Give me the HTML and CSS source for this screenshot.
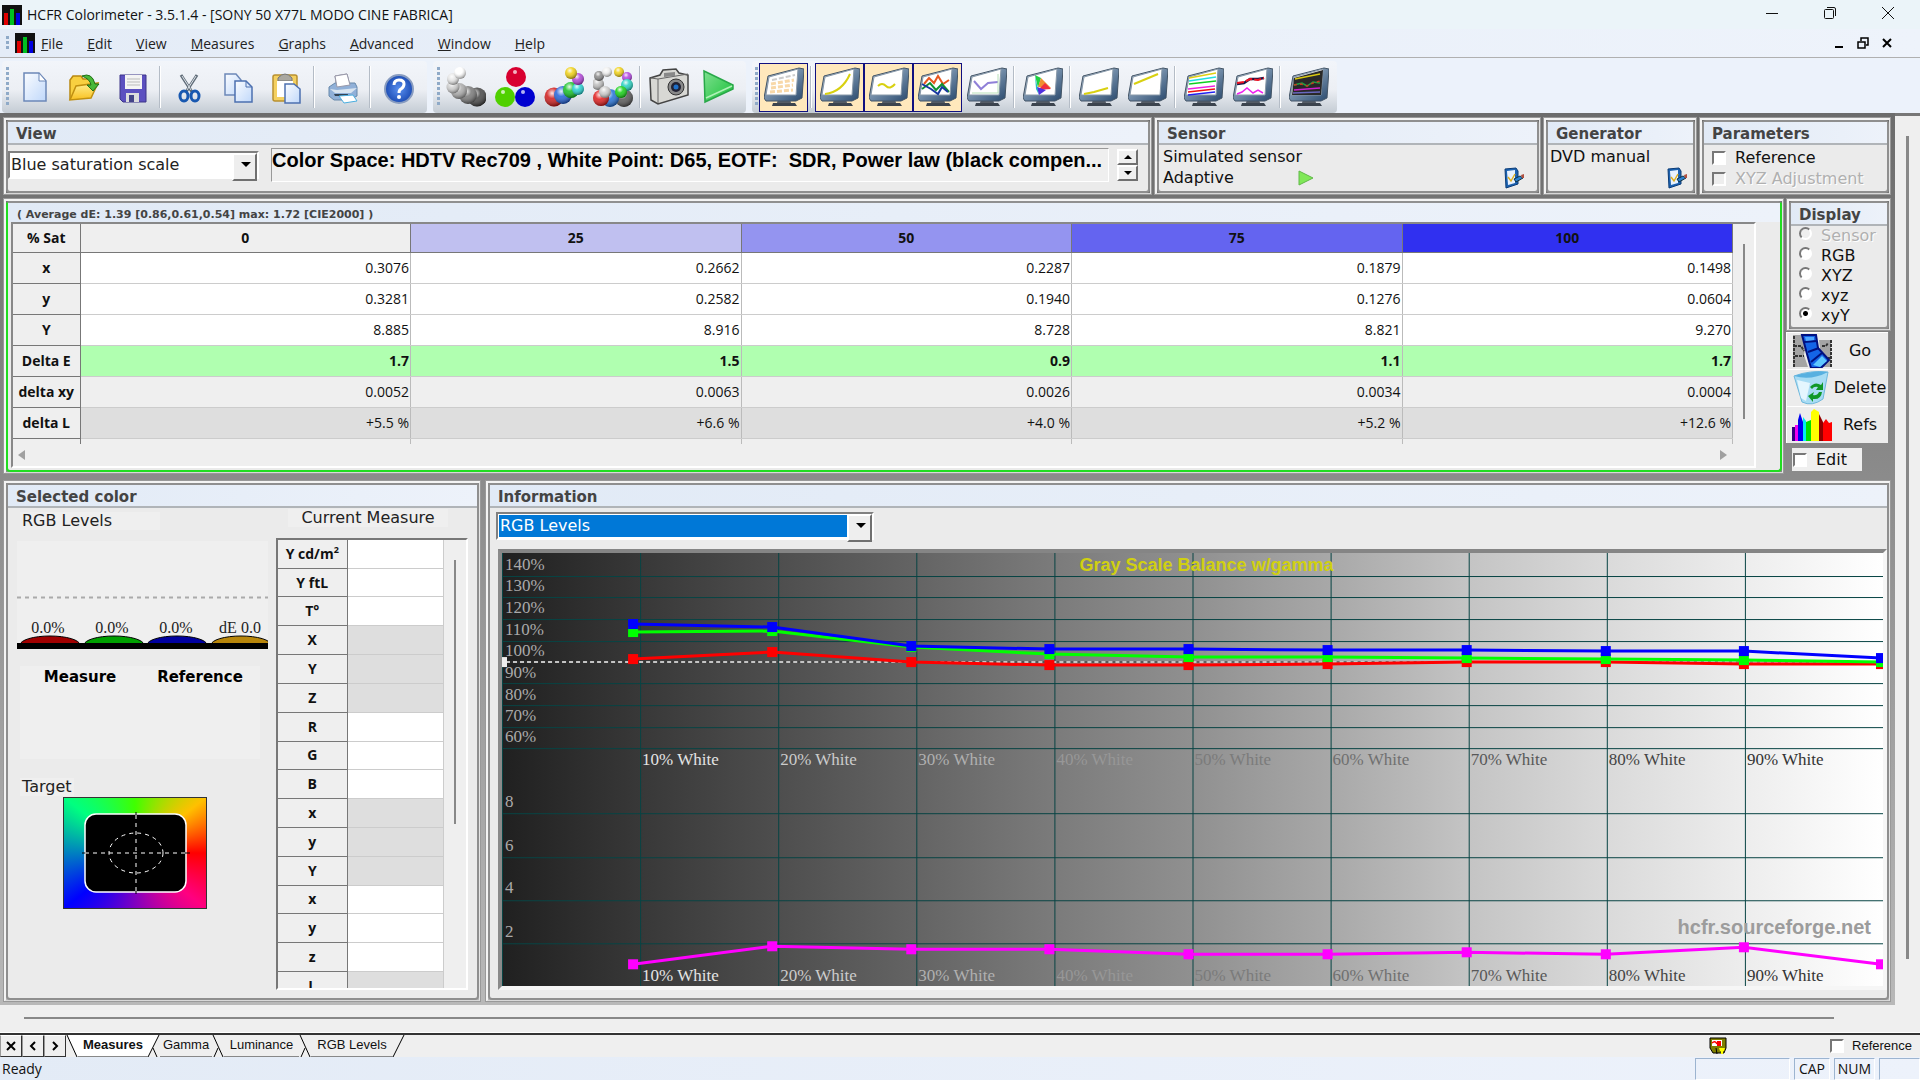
FILE: index.html
```
<!DOCTYPE html>
<html lang="en">
<head>
<meta charset="UTF-8" />
<title>HCFR Colorimeter</title>
<link rel="stylesheet" href="styles.css">
</head>
<body>
  <!-- shared icon parts -->
  <svg class="defs" width="0" height="0">
    <defs>
      <linearGradient id="blueMetal" x1="0" y1="0" x2="1" y2="1"><stop offset="0" stop-color="#b8cce0"/><stop offset="1" stop-color="#28486c"/></linearGradient>
      <linearGradient id="page" x1="0" y1="0" x2="1" y2="1"><stop offset="0" stop-color="#fafcff"/><stop offset="1" stop-color="#c0d8fa"/></linearGradient>
      <linearGradient id="folder" x1="0" y1="0" x2="0" y2="1"><stop offset="0" stop-color="#fff090"/><stop offset="1" stop-color="#f8c020"/></linearGradient>
      <linearGradient id="play" x1="0" y1="0" x2="1" y2="1"><stop offset="0" stop-color="#7fe090"/><stop offset="1" stop-color="#18c038"/></linearGradient>
      <radialGradient id="help"><stop offset="0" stop-color="#5a90f0"/><stop offset="1" stop-color="#1c4cb4"/></radialGradient>
      <radialGradient id="shine" cx=".4" cy=".3" r=".7"><stop offset="0" stop-color="#fff" stop-opacity=".9"/><stop offset=".4" stop-color="#fff" stop-opacity=".15"/><stop offset="1" stop-color="#000" stop-opacity=".45"/></radialGradient>
      <symbol id="monitor" viewBox="0 0 40 40">
        <path d="M14 32l12 0 1 4-14 0z" fill="#555c66"/>
        <path d="M9 36l22 0 2 3-25 0z" fill="#3c444e"/>
        <path d="M4 9L35 1l5 1-2 29-6 3H2l-2-3z" fill="url(#blueMetal)" stroke="#445566" stroke-width="1"/>
        <path d="M5 10L34 2l-2 26H2z" fill="#fff" stroke="#8898a8" stroke-width="1"/>
      </symbol>
      <symbol id="pen" viewBox="0 0 22 22">
        <path d="M2 2l11-1 2 3v13l-12 4z" fill="#1c62b0" stroke="#0b3c78"/>
        <path d="M4 4l8-1v13l-7 2z" fill="#e8f2ff"/>
        <path d="M5 10l3 4 4-7" fill="none" stroke="#e0b020" stroke-width="1.500"/>
        <path d="M11 12l6-3 3 2-7 4z" fill="#2a80d0" stroke="#134"/><path d="M18 8l3-1v4l-2 0z" fill="#b05040"/>
      </symbol>
    </defs>
  </svg>

  <header class="titlebar">
    <svg class="appicon" viewBox="0 0 20 20"><rect width="20" height="20" fill="#111"/><path d="M4 20V8" stroke="#e00000" stroke-width="4"/><path d="M10 20V4" stroke="#00c020" stroke-width="4"/><path d="M16 20V8" stroke="#0000e0" stroke-width="4"/></svg>
    <span class="title">HCFR Colorimeter - 3.5.1.4 - [SONY 50 X77L MODO CINE FABRICA]</span>
    <button class="winbtn" aria-label="Minimize"><svg viewBox="0 0 14 14"><path d="M1 7.500h12"/></svg></button>
    <button class="winbtn" aria-label="Restore"><svg viewBox="0 0 14 14"><rect x="1.500" y="3.500" width="9" height="9" rx="1"/><path d="M4 1.500h7q1.500 0 1.500 1.500v7"/></svg></button>
    <button class="winbtn" aria-label="Close"><svg viewBox="0 0 14 14"><path d="M1 1l12 12M13 1L1 13"/></svg></button>
  </header>

  <nav class="menubar">
    <span class="grip"></span>
    <svg class="appicon" viewBox="0 0 20 20"><rect width="20" height="20" fill="#111"/><path d="M4 20V8" stroke="#e00000" stroke-width="4"/><path d="M10 20V4" stroke="#00c020" stroke-width="4"/><path d="M16 20V8" stroke="#0000e0" stroke-width="4"/></svg>
    <a href="#"><u>F</u>ile</a>
    <a href="#"><u>E</u>dit</a>
    <a href="#"><u>V</u>iew</a>
    <a href="#"><u>M</u>easures</a>
    <a href="#"><u>G</u>raphs</a>
    <a href="#"><u>A</u>dvanced</a>
    <a href="#"><u>W</u>indow</a>
    <a href="#"><u>H</u>elp</a>
    <span class="spacer"></span>
    <button class="mdibtn" aria-label="Minimize child"><svg viewBox="0 0 12 12"><path d="M2 10h8"/></svg></button>
    <button class="mdibtn" aria-label="Restore child"><svg viewBox="0 0 12 12"><path d="M1 5h7v6H1zM4 4V1h7v7H9" stroke-width="1.500"/></svg></button>
    <button class="mdibtn" aria-label="Close child"><svg viewBox="0 0 12 12"><path d="M2 2l8 8M10 2l-8 8"/></svg></button>
  </nav>

  <div class="toolbars">
    <div class="toolbar">
      <span class="grip"></span>
      <button class="tool" aria-label="New"><svg viewBox="0 0 40 40"><path d="M9 6h15l7 8v20H9z" fill="url(#page)" stroke="#6c88b8" stroke-width="1.500"/><path d="M24 6v8h7z" fill="#fff" stroke="#6c88b8"/></svg></button>
      <button class="tool" aria-label="Open"><svg viewBox="0 0 40 40"><path d="M6 33V13l3-4h8l2 3h9v8" fill="#f8d040" stroke="#b88810" stroke-width="1.500"/><path d="M6 33l6-14 22-3-7 15z" fill="url(#folder)" stroke="#c09010" stroke-width="1.500"/><path d="M18 9q10-4 13 8h4l-6 7-6-6h4q-1-6-9-9z" fill="#48b838" stroke="#207018"/></svg></button>
      <button class="tool" aria-label="Save"><svg viewBox="0 0 40 40"><path d="M7 8h26v27H10l-3-3z" fill="#5c50c0" stroke="#3c3488"/><path d="M12 8h17v14H12z" fill="#f4f4f4"/><path d="M14 12h13M14 15h13M14 18h13" stroke="#bbb"/><path d="M13 26h13v9H13z" fill="#ddd"/><path d="M16 28h5v7h-5z" fill="#444488"/></svg></button>
      <span class="sep"></span>
      <button class="tool" aria-label="Cut"><svg viewBox="0 0 40 40"><path d="M12 8l11 17M28 8L17 25" stroke="#606c78" stroke-width="3"/><path d="M13 9l9 14M27 9l-9 14" stroke="#dde4ea"/><ellipse cx="15" cy="29" rx="4" ry="5" fill="none" stroke="#1858b0" stroke-width="3"/><ellipse cx="26" cy="29" rx="4" ry="5" fill="none" stroke="#1858b0" stroke-width="3"/></svg></button>
      <button class="tool" aria-label="Copy"><svg viewBox="0 0 40 40"><path d="M7 7h11l5 6v15H7z" fill="url(#page)" stroke="#6c88b8" stroke-width="1.500"/><path d="M17 14h11l6 6v15H17z" fill="url(#page)" stroke="#4c70b0" stroke-width="1.500"/><path d="M28 14v6h6" fill="none" stroke="#4c70b0"/></svg></button>
      <button class="tool" aria-label="Paste"><svg viewBox="0 0 40 40"><rect x="6" y="8" width="24" height="26" rx="2" fill="#f4d060" stroke="#b89030" stroke-width="1.500"/><path d="M11 11q7-8 14 0v3H11z" fill="#aaa8a0" stroke="#777"/><rect x="10" y="14" width="16" height="16" fill="#fff"/><path d="M18 17h9l6 5v14H18z" fill="url(#page)" stroke="#4c70b0" stroke-width="1.500"/></svg></button>
      <span class="sep"></span>
      <button class="tool" aria-label="Print"><svg viewBox="0 0 40 40"><path d="M12 9l12-2 3 12-13 3z" fill="#fff" stroke="#889"/><path d="M6 20l6-4h20l2 4v9l-8 4H11l-5-4z" fill="#90b0d8" stroke="#68a"/><path d="M12 9l12-2 3 11-13 2z" fill="#fff" stroke="#99a"/><path d="M7 22l7 1 20-2-6 5H12z" fill="#d8e4f0"/><path d="M11 27l14 0v2H12z" fill="#345"/><path d="M16 29l14-1 4 6-13 2z" fill="#fff" stroke="#4aaee0"/></svg></button>
      <span class="sep"></span>
      <button class="tool" aria-label="Help"><svg viewBox="0 0 40 40"><circle cx="20" cy="22" r="14" fill="url(#help)" stroke="#889cc0" stroke-width="2"/><path d="M15 18q0-5 5-5t5 4q0 3-3 5-2 1-2 4" fill="none" stroke="#fff" stroke-width="3"/><circle cx="20" cy="30" r="2" fill="#fff"/></svg></button>
    </div>

    <div class="toolbar">
      <span class="grip"></span>
      <button class="tool" aria-label="Gray scale"><svg viewBox="0 0 40 40">
        <circle cx="31" cy="30" r="9.500" fill="#444"/><circle cx="31" cy="30" r="9.500" fill="url(#shine)"/>
        <circle cx="22" cy="28" r="9" fill="#777"/><circle cx="22" cy="28" r="9" fill="url(#shine)"/>
        <circle cx="13" cy="24" r="8" fill="#aaa"/><circle cx="13" cy="24" r="8" fill="url(#shine)"/>
        <circle cx="7" cy="20" r="6.500" fill="#ccc"/><circle cx="7" cy="20" r="6.500" fill="url(#shine)"/>
        <circle cx="7" cy="12" r="6" fill="#e4e4e4"/><circle cx="7" cy="12" r="6" fill="url(#shine)"/>
        <circle cx="14" cy="6" r="6" fill="#fff"/><circle cx="14" cy="6" r="6" fill="url(#shine)"/></svg></button>
      <button class="tool" aria-label="Primaries"><svg viewBox="0 0 40 40"><circle cx="21" cy="10" r="10" fill="#d80030"/><circle cx="10" cy="30" r="10" fill="#50d000"/><circle cx="30" cy="30" r="10" fill="#0000d0"/><g fill="#fff" opacity=".7"><circle cx="20" cy="5" r="2"/><circle cx="8" cy="25" r="2"/><circle cx="28" cy="25" r="2"/></g></svg></button>
      <button class="tool" aria-label="Secondaries"><svg viewBox="0 0 40 40">
        <circle cx="10" cy="30" r="9.500" fill="#d01818"/><circle cx="10" cy="30" r="9.500" fill="url(#shine)"/>
        <circle cx="19" cy="28" r="9" fill="#2060d8"/><circle cx="19" cy="28" r="9" fill="url(#shine)"/>
        <circle cx="27" cy="23" r="8" fill="#10c020"/><circle cx="27" cy="23" r="8" fill="url(#shine)"/>
        <circle cx="34" cy="22" r="6" fill="#20d0d0"/><circle cx="34" cy="22" r="6" fill="url(#shine)"/>
        <circle cx="34" cy="12" r="6" fill="#b040d8"/><circle cx="34" cy="12" r="6" fill="url(#shine)"/>
        <circle cx="27" cy="6" r="6" fill="#f0d010"/><circle cx="27" cy="6" r="6" fill="url(#shine)"/></svg></button>
      <button class="tool" aria-label="All colors"><svg viewBox="0 0 40 40">
        <circle cx="31" cy="31" r="9" fill="#555"/><circle cx="31" cy="31" r="9" fill="url(#shine)"/>
        <circle cx="17" cy="31" r="9" fill="#2070d8"/><circle cx="17" cy="31" r="9" fill="url(#shine)"/>
        <circle cx="8" cy="31" r="8" fill="#e01818"/><circle cx="8" cy="31" r="8" fill="url(#shine)"/>
        <circle cx="5" cy="17" r="6" fill="#bbb"/><circle cx="5" cy="17" r="6" fill="url(#shine)"/>
        <circle cx="12" cy="25" r="6" fill="#ccc"/><circle cx="12" cy="25" r="6" fill="url(#shine)"/>
        <circle cx="6" cy="9" r="5" fill="#888"/><circle cx="6" cy="9" r="5" fill="url(#shine)"/>
        <circle cx="14" cy="5" r="5" fill="#eee"/><circle cx="14" cy="5" r="5" fill="url(#shine)"/>
        <circle cx="26" cy="5" r="5" fill="#f0d010"/><circle cx="26" cy="5" r="5" fill="url(#shine)"/>
        <circle cx="34" cy="10" r="5" fill="#b040e0"/><circle cx="34" cy="10" r="5" fill="url(#shine)"/>
        <circle cx="34" cy="18" r="6" fill="#20d0c0"/><circle cx="34" cy="18" r="6" fill="url(#shine)"/>
        <circle cx="28" cy="25" r="6" fill="#10d010"/><circle cx="28" cy="25" r="6" fill="url(#shine)"/></svg></button>
      <span class="sep"></span>
      <button class="tool" aria-label="Snapshot"><svg viewBox="0 0 40 40"><path d="M1 11l10-3 3-5 13-1 3 4 9 2v20L9 37l-7-4z" fill="#d8d8d4" stroke="#444" stroke-width="1.500"/><path d="M9 12v24M2 11l7 1 30-5" fill="none" stroke="#666"/><path d="M15 6l11-1v4l-11 1z" fill="#888"/><circle cx="27" cy="20" r="8" fill="#888" stroke="#333"/><circle cx="27" cy="20" r="5" fill="#223"/><circle cx="27" cy="20" r="2.500" fill="#2070c8"/></svg></button>
      <button class="tool" aria-label="Run"><svg viewBox="0 0 40 40"><path d="M6 4l29 14v4L7 35z" fill="url(#play)" stroke="#28a848" stroke-width="1.500"/><path d="M8 31l26-12" stroke="#b0f0b8" stroke-width="1.500"/></svg></button>
    </div>

    <div class="toolbar">
      <span class="grip"></span>
      <button class="tool on" aria-label="Measures"><svg viewBox="0 0 40 40"><use href="#monitor"/><path d="M8 13l23-5" stroke="#ccc" stroke-width="2" stroke-dasharray="5 2"/><path d="M7 17l23-4M7 21l22-3M6 25l23-2" stroke="#f8d8a8" stroke-width="3" stroke-dasharray="5 2"/></svg></button>
      <span class="sep"></span>
      <button class="tool on" aria-label="Luminance"><svg viewBox="0 0 40 40"><use href="#monitor"/><path d="M5 27q17-2 25-20" fill="none" stroke="#d8d010" stroke-width="2"/></svg></button>
      <button class="tool on" aria-label="Gamma"><svg viewBox="0 0 40 40"><use href="#monitor"/><path d="M9 19q4-4 8 0t9-2" fill="none" stroke="#d8d010" stroke-width="2"/></svg></button>
      <button class="tool on" aria-label="RGB levels"><svg viewBox="0 0 40 40"><use href="#monitor"/><g fill="none" stroke-width="2"><path d="M6 17l5-6 5 5 4-7 5 8 6-4" stroke="#e85820"/><path d="M4 22l8-6 6 7 6-6 7 8" stroke="#109030"/><path d="M4 17l9 5 7 5 4-7 6 5" stroke="#1838a0"/></g></svg></button>
      <button class="tool" aria-label="Color temperature"><svg viewBox="0 0 40 40"><use href="#monitor"/><path d="M7 14l7 8 7-6 10-1" fill="none" stroke="#9080d8" stroke-width="2"/><path d="M31 7v19H5" fill="none" stroke="#b8e0b8"/></svg></button>
      <span class="sep"></span>
      <button class="tool" aria-label="CIE diagram"><svg viewBox="0 0 40 40"><use href="#monitor"/><path d="M12 8l6 3-3 10z" fill="#20d040"/><path d="M18 11l10 10-13-1z" fill="#f09030"/><path d="M12 8l4 20-3-6z" fill="#20c0c0"/><path d="M22 16l6 6-13 1z" fill="#f03040"/><path d="M14 20l9 3-7 5z" fill="#5030e0"/></svg></button>
      <span class="sep"></span>
      <button class="tool" aria-label="Near black"><svg viewBox="0 0 40 40"><use href="#monitor"/><path d="M5 27l10-2 14-4" fill="none" stroke="#d8d010" stroke-width="2"/></svg></button>
      <button class="tool" aria-label="Near white"><svg viewBox="0 0 40 40"><use href="#monitor"/><path d="M6 17l12-5 12-5" fill="none" stroke="#d8d010" stroke-width="2"/></svg></button>
      <span class="sep"></span>
      <button class="tool" aria-label="Sat luminance"><svg viewBox="0 0 40 40"><use href="#monitor"/><g stroke-width="1.500"><path d="M5 11l27-5" stroke="#e0d010"/><path d="M5 14l27-4" stroke="#20e0e0"/><path d="M5 17l27-3" stroke="#10d020"/><path d="M4 22l27-3" stroke="#f020e0"/><path d="M4 25l27-3" stroke="#f01010"/><path d="M4 28l27-3" stroke="#2020f0"/></g></svg></button>
      <button class="tool" aria-label="Sat shift"><svg viewBox="0 0 40 40"><use href="#monitor"/><path d="M4 17l7-1 6-4 8 0 6-1" fill="none" stroke="#181848" stroke-width="2.500"/><path d="M4 16l7-1 6-3 8 1 6-2" fill="none" stroke="#f01020" stroke-width="2" stroke-dasharray="7 2"/><path d="M4 27l5-2 5-4 6 5 5-3 5 3" fill="none" stroke="#f020f0" stroke-width="1.500"/></svg></button>
      <span class="sep"></span>
      <button class="tool" aria-label="Free measures"><svg viewBox="0 0 40 40"><use href="#monitor"/><path d="M5 11L34 3l-2 25H3z" fill="#282828"/><g fill="none" stroke-width="1.500"><path d="M6 12l25-5" stroke="#d8c810"/><path d="M5 18l8-2 5 3 6-4 7 1" stroke="#20a040"/><path d="M5 18l7-1 6 2 6-3 7-2" stroke="#c04020" stroke-dasharray="3 3"/><path d="M5 23l26-2" stroke="#d020d0"/><path d="M4 26l27-1" stroke="#6868c0"/></g></svg></button>
    </div>
  </div>

  <div class="workspace">
    <main class="work">
      <div class="row">
        <section class="panel grow">
          <div class="inner">
            <h2>View</h2>
            <div class="viewbody">
              <div class="combo view"><select aria-label="View"><option>Blue saturation scale</option></select></div>
              <div class="info">Color Space: HDTV Rec709 , White Point: D65, EOTF:&nbsp; SDR, Power law (black compen...</div>
              <div class="spin">
                <button aria-label="Up"><i class="up"></i></button>
                <button aria-label="Down"><i class="down"></i></button>
              </div>
            </div>
          </div>
        </section>
        <section class="panel sensor">
          <div class="inner">
            <h2>Sensor</h2>
            <div class="devbody">
              <div class="lines"><p>Simulated sensor</p><p>Adaptive <svg class="mini" viewBox="0 0 16 16"><path d="M1 1l14 7L1 15z" fill="#80e858" stroke="#60b848"/></svg></p></div>
              <button class="iconbtn" aria-label="Configure sensor"><svg width="22" height="22"><use href="#pen"/></svg></button>
            </div>
          </div>
        </section>
        <section class="panel generator">
          <div class="inner">
            <h2>Generator</h2>
            <div class="devbody">
              <div class="lines"><p>DVD manual</p></div>
              <button class="iconbtn" aria-label="Configure generator"><svg width="22" height="22"><use href="#pen"/></svg></button>
            </div>
          </div>
        </section>
        <section class="panel params">
          <div class="inner">
            <h2>Parameters</h2>
            <div class="checks">
              <label><input type="checkbox">Reference</label>
              <label class="off"><input type="checkbox" disabled>XYZ Adjustment</label>
            </div>
          </div>
        </section>
      </div>

      <div class="row">
        <section class="panel green grow">
          <div class="inner">
            <h2>( Average dE: 1.39 [0.86,0.61,0.54] max: 1.72 [CIE2000] )</h2>
            <div class="gridframe">
              <div class="gridclip">
                <table class="sat">
                  <tr><th>% Sat</th><th class="s0">0</th><th class="s25">25</th><th class="s50">50</th><th class="s75">75</th><th class="s100">100</th></tr>
                  <tr><th>x</th><td>0.3076</td><td>0.2662</td><td>0.2287</td><td>0.1879</td><td>0.1498</td></tr>
                  <tr><th>y</th><td>0.3281</td><td>0.2582</td><td>0.1940</td><td>0.1276</td><td>0.0604</td></tr>
                  <tr><th>Y</th><td>8.885</td><td>8.916</td><td>8.728</td><td>8.821</td><td>9.270</td></tr>
                  <tr class="de"><th>Delta E</th><td>1.7</td><td>1.5</td><td>0.9</td><td>1.1</td><td>1.7</td></tr>
                  <tr class="light"><th>delta xy</th><td>0.0052</td><td>0.0063</td><td>0.0026</td><td>0.0034</td><td>0.0004</td></tr>
                  <tr class="gray"><th>delta L</th><td>+5.5 %</td><td>+6.6 %</td><td>+4.0 %</td><td>+5.2 %</td><td>+12.6 %</td></tr>
                  <tr class="light"><th></th><td></td><td></td><td></td><td></td><td></td></tr>
                </table>
                <div class="vthumb"></div>
              </div>
              <div class="hbar"><i class="left"></i><i class="right"></i></div>
            </div>
          </div>
        </section>

        <aside class="side">
          <section class="panel">
            <div class="inner">
              <h2>Display</h2>
              <div class="radios">
                <label class="off"><input type="radio" name="display" disabled>Sensor</label>
                <label><input type="radio" name="display">RGB</label>
                <label><input type="radio" name="display">XYZ</label>
                <label><input type="radio" name="display">xyz</label>
                <label><input type="radio" name="display" checked>xyY</label>
              </div>
            </div>
          </section>
          <div class="actions">
            <button><svg viewBox="0 0 40 34"><path d="M1 1h10l3 8-2 12 4 12H1zM27 6h12v27h-9z" fill="#a4a4a4"/><path d="M2 2v31M39 6v28M2 12h7l3 5M3 22h9M30 12h4l2-3M32 24h6" stroke="#333" stroke-width="2" stroke-dasharray="3 1" fill="none"/><path d="M10 1h14l2 13 11 12-8 8H19L15 20z" fill="#1464e8" stroke="#001080" stroke-width="2"/><path d="M12 8l13-1M16 18l11-4M19 28l11-9" stroke="#001080" stroke-width="2"/><path d="M21 31l9-9 5 5-7 6z" fill="#60c8ff"/><path d="M13 3h9v3l-8 1z" fill="#50a8ff"/></svg><span>Go</span></button>
            <button><svg viewBox="0 0 40 34"><path d="M2 5q16-6 34-4l-5 27q-11 8-21 3z" fill="#a8dcf4" stroke="#70b8dc"/><path d="M2 5q17 5 34-4-14-2-34 4z" fill="#58b0e0"/><path d="M5 9l13 3-4 18-5-3z" fill="#e4f6fe"/><path d="M18 16q5-6 11-2l2-3v8h-7l2-3q-4-1-6 2zM30 21q-1 8-9 7l0 3-5-6 6-4-1 3q4 1 6-3z" fill="#109828"/></svg><span>Delete</span></button>
            <button><svg viewBox="0 0 40 34"><path d="M0 33V19h3v14z" fill="#300080"/><path d="M3 33V17h3v16z" fill="#f000f0"/><path d="M6 33V12l2-7 3 9v19z" fill="#0000f0"/><path d="M11 33V9l3 4v20z" fill="#00f0f0"/><path d="M14 33V14l5-2v21z" fill="#00e000"/><path d="M19 33V4l3-3 5 3v29z" fill="#ffff00"/><path d="M27 33V6l4 8v19z" fill="#900000"/><path d="M31 33V15l3-4 3 4 3-1v19z" fill="#ff0000"/></svg><span>Refs</span></button>
          </div>
          <label class="edit"><input type="checkbox">Edit</label>
        </aside>
      </div>

      <div class="row last">
        <section class="panel selected">
          <div class="inner">
            <h2>Selected color</h2>
            <div class="selbody">
              <div class="selleft">
                <h3>RGB Levels</h3>
                <svg class="levels" viewBox="0 0 251 108">
                  <path d="M0 56.500h251" stroke="#aaa" stroke-width="2" stroke-dasharray="4 4"/>
                  <g stroke="#000" stroke-width="1"><ellipse cx="33" cy="104" rx="30" ry="9" fill="#a00000"/><ellipse cx="97" cy="104" rx="30" ry="9" fill="#00a000"/><ellipse cx="160" cy="104" rx="30" ry="9" fill="#0000a0"/><ellipse cx="224" cy="104" rx="30" ry="9" fill="#b8860b"/></g>
                  <rect y="102" width="251" height="6"/>
                  <g text-anchor="middle"><text x="31" y="92">0.0%</text><text x="95" y="92">0.0%</text><text x="159" y="92">0.0%</text><text x="223" y="92">dE 0.0</text></g>
                </svg>
                <div class="compare"><span>Measure</span><span>Reference</span></div>
                <h3 class="tight">Target</h3>
                <div class="target">
                  <svg viewBox="0 0 108 82"><rect x="3" y="2" width="101" height="78" rx="11" stroke="#fff" stroke-width="1.500"/><path d="M0 41h108M54 0v82" stroke="#000"/><g fill="none" stroke="#fff" stroke-width="1" stroke-dasharray="4 4"><path d="M3 41h102M54 3v77"/><ellipse cx="54" cy="41" rx="27" ry="20"/></g></svg>
                </div>
              </div>
              <div class="selright">
                <h3>Current Measure</h3>
                <div class="measureclip">
                  <table class="meas">
                    <tr><th>Y cd/m<sup>2</sup></th><td></td></tr>
                    <tr><th>Y ftL</th><td></td></tr>
                    <tr><th>T°</th><td></td></tr>
                    <tr class="gray"><th>X</th><td></td></tr>
                    <tr class="gray"><th>Y</th><td></td></tr>
                    <tr class="gray"><th>Z</th><td></td></tr>
                    <tr><th>R</th><td></td></tr>
                    <tr><th>G</th><td></td></tr>
                    <tr><th>B</th><td></td></tr>
                    <tr class="gray"><th>x</th><td></td></tr>
                    <tr class="gray"><th>y</th><td></td></tr>
                    <tr class="gray"><th>Y</th><td></td></tr>
                    <tr><th>x</th><td></td></tr>
                    <tr><th>y</th><td></td></tr>
                    <tr><th>z</th><td></td></tr>
                    <tr class="gray"><th>L</th><td></td></tr>
                  </table>
                  <div class="vthumb"></div>
                </div>
              </div>
            </div>
          </div>
        </section>

        <section class="panel grow">
          <div class="inner">
            <h2>Information</h2>
            <div class="combo graph"><select aria-label="Information"><option>RGB Levels</option></select></div>
            <div class="chart"><svg id="chart" viewBox="0 0 1380 433"></svg></div>
          </div>
        </section>
      </div>
    </main>
    <div class="vscroll"><div class="thumb"></div></div>
    <div class="hscroll"><div class="thumb"></div></div>
  </div>

  <div class="tabbar">
    <button class="nav" aria-label="Close tab"><svg viewBox="0 0 12 12"><path d="M2 2l8 8M10 2l-8 8"/></svg></button>
    <button class="nav" aria-label="Previous tab"><svg viewBox="0 0 12 12"><path d="M8 2L4 6l4 4"/></svg></button>
    <button class="nav" aria-label="Next tab"><svg viewBox="0 0 12 12"><path d="M4 2l4 4-4 4"/></svg></button>
    <svg class="edge" viewBox="0 0 12 22"><path d="M1 0l11 22V0z" fill="#fff" stroke="none"/><path d="M1 0l10 22"/></svg>
    <button class="tab current">Measures</button>
    <svg class="edge" viewBox="0 0 12 22"><path d="M0 0h11L0 22z" fill="#fff" stroke="none"/><path d="M11 0L0 22M5 13l4 9"/></svg>
    <button class="tab gamma">Gamma</button>
    <svg class="edge" viewBox="0 0 12 22"><path d="M1 0l10 22M2 22l4-9"/></svg>
    <button class="tab lum">Luminance</button>
    <svg class="edge" viewBox="0 0 12 22"><path d="M1 0l10 22M2 22l4-9"/></svg>
    <button class="tab rgb">RGB Levels</button>
    <svg class="edge" viewBox="0 0 12 22"><path d="M0 22L11 0"/></svg>
    <span class="spacer"></span>
    <svg class="tabicon" viewBox="0 0 18 18"><path d="M1 1h16v10l-2 5H4L1 11z" fill="#808000" stroke="#000"/><path d="M3 3h10v6H3z" fill="#fff"/><path d="M3 6q3-3 5 1" fill="none" stroke="#f00" stroke-width="1.500"/><path d="M8 4h4v5H8z" fill="#f00"/><path d="M10 11h6l-1 3h-1v3h-2v-3h-1z" fill="#ff0"/><path d="M7 11l1 6" stroke="#000"/></svg>
    <label class="tabref"><input type="checkbox">Reference</label>
  </div>

  <footer class="status">
    <span class="spacer">Ready</span>
    <span class="pane wide"></span><span class="pane cap">CAP</span><span class="pane num">NUM</span><span class="pane num"></span>
  </footer>

  <script>
    var step = 138;
    var xs = [131, 270, 409, 547, 686, 825, 964, 1103, 1241, 1378];
    var series = [
      {color: "#ff0000", ys: [106, 99, 109, 112, 112, 111, 109, 109, 111, 111]},
      {color: "#00ff00", ys: [79, 78, 94, 101, 104, 104, 105, 106, 107, 109]},
      {color: "#0000ff", ys: [71, 74, 93, 96, 96, 97, 97, 98, 98, 105]},
      {color: "#ff00ff", ys: [411, 393, 396, 396, 401, 401, 399, 401, 394, 411]}
    ];
    var grays = ["#202020", "#383838", "#4e4e4e", "#646464", "#7b7b7b", "#909090", "#a8a8a8", "#c4c4c4", "#dadada", "#ededed", "#ffffff"];
    var labels = ["#e4e4e4", "#cccccc", "#b0b0b0", "#979797", "#7b7b7b", "#707070", "#585858", "#444444", "#333333"];
    var out = "<defs><linearGradient id='ramp'>";
    for (var i = 0; i < grays.length; i++) {
      out += "<stop offset='" + i / 10 + "' stop-color='" + grays[i] + "'/>";
    }
    out += "</linearGradient></defs><rect width='1380' height='433' fill='url(#ramp)'/>";

    // grid
    var hlines = [23, 44, 66, 88, 130, 152, 174, 195, 260, 304, 347, 390];
    out += "<g fill='#084444'><rect x='0' y='0' width='1' height='433'/>";
    for (i = 0; i < hlines.length; i++) {
      out += "<rect x='0' y='" + hlines[i] + "' width='1380' height='1'/>";
    }
    for (i = 1; i < 10; i++) {
      out += "<rect x='" + i * step + "' y='0' width='1' height='433'/>";
    }
    out += "</g><path d='M4 109h1376' stroke='#333' stroke-width='1'/><path d='M4 109h1376' stroke='#c4c4c4' stroke-width='2' stroke-dasharray='4 3'/>";
    out += "<rect x='0' y='104' width='5' height='10' fill='#eee'/>";

    // axis texts
    var left = [["140%", 17], ["130%", 38], ["120%", 60], ["110%", 82], ["100%", 103], ["90%", 125], ["80%", 147], ["70%", 168], ["60%", 189], ["8", 254], ["6", 298], ["4", 340], ["2", 384]];
    for (i = 0; i < left.length; i++) {
      out += "<text x='3' y='" + left[i][1] + "' fill='#aaa'>" + left[i][0] + "</text>";
    }
    for (i = 1; i < 10; i++) {
      var t = "' fill='" + labels[i - 1] + "'>" + i * 10 + "% White</text>";
      out += "<text x='" + (i * step + 2) + "' y='212" + t;
      out += "<text x='" + (i * step + 2) + "' y='428" + t;
    }
    out += "<text class='caption' x='577' y='18'>Gray Scale Balance w/gamma</text>";
    out += "<text class='mark' x='1368' y='381' text-anchor='end'>hcfr.sourceforge.net</text>";

    // curves
    for (var s = 0; s < series.length; s++) {
      var pts = "", dots = "";
      for (i = 0; i < xs.length; i++) {
        pts += xs[i] + "," + series[s].ys[i] + " ";
        dots += "<rect x='" + (xs[i] - 5) + "' y='" + (series[s].ys[i] - 5) + "' width='10' height='10'/>";
      }
      out += "<g fill='" + series[s].color + "'>" + dots + "<polyline points='" + pts + "' fill='none' stroke='" + series[s].color + "' stroke-width='3'/></g>";
    }
    document.getElementById("chart").innerHTML = out;
  </script>
</body>
</html>
```

FILE: styles.css
```
* {
  box-sizing: border-box;
}
body {
  margin: 0;
  height: 100vh;
  display: flex;
  flex-direction: column;
  overflow: hidden;
  background: #ebf2fa;
  color: #111;
  font-family: "Open Sans", "Noto Sans", sans-serif;
  font-size: 14px;
}
button {
  padding: 0;
  border: 0;
  background: none;
  font: inherit;
  color: inherit;
}
h2, h3, p {
  margin: 0;
}
.defs {
  position: absolute;
}
.grow, .spacer {
  flex: 1;
  min-width: 0;
}

/* title and menu */
.titlebar {
  display: flex;
  align-items: center;
  height: 29px;
  padding: 0 3px 0 2px;
  background: #ebf4f9;
}
.appicon {
  width: 20px;
  height: 20px;
}
.title {
  flex: 1;
  padding-left: 5px;
}
.winbtn {
  width: 58px;
  height: 29px;
}
.winbtn svg {
  width: 14px;
  height: 14px;
  fill: none;
  stroke: #111;
}
.menubar {
  display: flex;
  align-items: center;
  height: 29px;
  padding-left: 6px;
  border-bottom: 1px solid #b0b0b0;
  background: linear-gradient(90deg, #e4ecf7, #eef3fb);
}
.menubar a {
  margin-right: 24px;
  color: #222;
  text-decoration: none;
}
.menubar .appicon {
  margin: 0 6px 0 6px;
}
.mdibtn {
  width: 24px;
}
.mdibtn:last-child {
  margin-right: 21px;
}
.mdibtn svg {
  width: 12px;
  height: 12px;
  fill: none;
  stroke: #000;
  stroke-width: 2;
}
.grip {
  width: 3px;
  height: 40px;
  background: repeating-linear-gradient(#8faac8 0 3px, transparent 3px 5px);
}
.menubar .grip {
  height: 14px;
}

/* toolbars */
.toolbars {
  display: flex;
  gap: 6px;
  height: 55px;
  padding: 3px 0 0 2px;
  background: #ecf2fb;
}
.toolbar {
  display: flex;
  align-items: center;
  padding: 0 4px 0 4px;
  border-radius: 4px;
  background: linear-gradient(#f2f5fa 0%, #eceff4 55%, #c4ccd4 100%);
}
.toolbar .grip {
  margin-right: 1px;
}
.toolbar:nth-child(3) {
  padding-left: 3px;
}
.tool {
  display: flex;
  align-items: center;
  justify-content: center;
  width: 49px;
  height: 49px;
}
.tool svg {
  width: 40px;
  height: 40px;
}
.tool.on {
  border: 1px solid #101080;
  background: #ffe8bc;
}
.sep {
  width: 2px;
  height: 42px;
  margin: 0 3px 0 2px;
  border-left: 1px solid #b4bcc6;
  background: #fff;
}

/* work area */
.workspace {
  flex: 1;
  min-height: 0;
  display: grid;
  grid-template-columns: 1fr 25px;
  grid-template-rows: 1fr 28px;
  background: #efefef;
}
.work {
  display: flex;
  flex-direction: column;
  gap: 3px;
  min-height: 0;
  padding: 4px 4px 3px 3px;
  background: linear-gradient(#6c6c6c, #b8b8b8);
}
.row {
  display: flex;
  gap: 2px;
}
.row.last {
  flex: 1;
  gap: 4px;
  min-height: 0;
  margin-top: 3px;
}
.panel {
  display: flex;
  border: 3px solid #f4f4f4;
  border-right: 2px solid #e4e4e4;
  border-bottom: 2px solid #d8d8d8;
  outline: 1px solid #999;
  outline-offset: -1px;
}
.inner {
  flex: 1;
  min-width: 0;
  border: 2px solid #8f8f8f;
  border-radius: 4px;
  background: #ebebeb;
}
h2 {
  height: 23px;
  padding-left: 8px;
  border-bottom: 2px solid #b0b4b8;
  background: linear-gradient(90deg, #e1eaf6, #edf2fa);
  color: #444;
  font: bold 15px/24px "DejaVu Sans", sans-serif;
}
h3, .lines, .checks, .radios, .actions, .edit, select {
  font: 16px/18px "DejaVu Sans", sans-serif;
}
.sensor {
  width: 387px;
}
.generator {
  width: 154px;
}
.params {
  width: 192px;
}
.combo {
  position: relative;
  height: 28px;
  border: 2px solid;
  border-color: #808080 #fff #fff #808080;
  background: #fff;
}
.combo select {
  width: 100%;
  height: 24px;
  padding: 0 1px;
  border: 0;
  appearance: none;
  background: #fff;
  color: #222;
}
.combo::after {
  content: "";
  position: absolute;
  right: 6px;
  top: 9px;
  border: 5px solid transparent;
  border-top-color: #000;
  pointer-events: none;
}
.combo::before {
  content: "";
  position: absolute;
  right: 0;
  top: 0;
  width: 21px;
  height: 24px;
  border: 2px solid;
  border-color: #fff #707070 #707070 #fff;
  background: #eee;
  pointer-events: none;
}
.combo.view {
  width: 251px;
}
.combo.graph {
  width: 378px;
  margin: 4px 0 0 6px;
}
.combo.graph select {
  background: #0078d7;
  color: #fff;
  border: 1px solid #fff;
}
.viewbody {
  display: flex;
  height: 46px;
  padding-top: 6px;
}
.info {
  flex: 1;
  height: 34px;
  margin: -3px 8px 0 12px;
  border: 1px solid;
  border-color: #999 #fff #fff #999;
  background: #efefef;
  color: #000;
  font: bold 20px/23px "Liberation Sans", sans-serif;
  white-space: nowrap;
  overflow: hidden;
}
.spin {
  margin: -2px 10px 0 0;
}
.spin button {
  display: flex;
  align-items: center;
  justify-content: center;
  width: 21px;
  height: 16px;
  border: 2px solid;
  border-color: #fff #707070 #707070 #fff;
  background: #efefef;
}
.spin i {
  border: 4px solid transparent;
}
.spin .up {
  border-bottom-color: #000;
  margin-bottom: 4px;
}
.spin .down {
  border-top-color: #000;
  margin-top: 4px;
}
.devbody {
  display: flex;
  align-items: flex-end;
  height: 46px;
}
.lines {
  flex: 1;
  align-self: flex-start;
  padding: 1px 0 0 4px;
  line-height: 21px;
}
.generator .lines {
  padding-left: 2px;
}
.lines p {
  display: flex;
  align-items: center;
}
.mini {
  width: 16px;
  height: 16px;
  margin-left: 64px;
}
.iconbtn {
  width: 22px;
  height: 22px;
  margin: 0 12px 2px 0;
}
.generator .iconbtn {
  margin-right: 5px;
}
.checks {
  padding: 2px 0 0 7px;
}
.checks label, .radios label, .edit, .tabref {
  display: flex;
  align-items: center;
}
.checks label {
  height: 21px;
}
input[type=checkbox] {
  appearance: none;
  width: 14px;
  height: 14px;
  margin: 0 9px 0 1px;
  border: 2px solid;
  border-color: #777 #fff #fff #777;
  background: #fff;
}
input[type=checkbox]:disabled {
  background: #eee;
}
.off {
  color: #b0b0b0;
  text-shadow: 1px 1px #fff;
}

/* saturation table */
.green .inner {
  height: 271px;
  border-color: #909090 #20dd20 #20dd20;
}
.green h2 {
  height: 19px;
  padding-left: 9px;
  border: 0;
  font-size: 11px;
  line-height: 24px;
}
.gridframe {
  height: 246px;
  margin: 0 24px 0 3px;
  border: 2px solid;
  border-color: #888 #fff #fff #888;
  background: #efefef;
}
.gridclip {
  display: flex;
  height: 220px;
  overflow: hidden;
}
table {
  border-collapse: collapse;
}
.sat {
  width: calc(100% - 21px);
  table-layout: fixed;
}
.sat th {
  height: 31px;
  border-right: 1px solid #777;
  border-bottom: 1px solid #777;
  background: #efefef;
  padding: 0;
}
.sat tr:first-child th {
  height: 28px;
}
.sat th:first-child {
  width: 67px;
}
.sat td {
  padding: 0 1px;
  border-right: 1px solid #bbb;
  border-bottom: 1px solid #ccc;
  background: #fff;
  text-align: right;
}
.sat .s25 { background: #c0c0f0; }
.sat .s50 { background: #9494f0; }
.sat .s75 { background: #6464f0; }
.sat .s100 { background: #3030f0; }
.sat .de td {
  background: #b0ffb0;
  font-weight: bold;
}
.sat .light td {
  background: #efefef;
}
.gray td {
  background: #dedede !important;
}
.vthumb {
  flex: none;
  width: 2px;
  height: 175px;
  margin: 20px 9px 0 10px;
  background: #888;
}
.hbar {
  display: flex;
  justify-content: space-between;
  align-items: center;
  height: 22px;
  padding: 0 27px 0 5px;
}
.hbar i {
  border: 5px solid transparent;
}
.hbar .left { border-right: 7px solid #a0a0a0; border-left: 0; }
.hbar .right { border-left: 7px solid #a0a0a0; border-right: 0; }

/* right hand column */
.side {
  width: 105px;
}
.radios {
  padding: 0 0 2px 8px;
}
.radios label {
  height: 19px;
  margin-bottom: 1px;
}
.radios label:last-child {
  margin-bottom: 0;
}
input[type=radio] {
  appearance: none;
  width: 13px;
  height: 13px;
  margin: 0 9px 4px 0;
  border: 2px solid;
  border-color: #777 #fff #fff #777;
  border-radius: 50%;
  background: #fff;
}
input[type=radio]:checked {
  background: radial-gradient(#000 0 2px, #fff 3px);
}
input[type=radio]:disabled {
  background: #eee;
}
.actions {
  margin: 1px 2px 0 0;
  border-right: 1px solid #888;
  border-bottom: 1px solid #888;
}
.actions button {
  display: flex;
  align-items: center;
  width: 100%;
  height: 37px;
  padding-left: 5px;
  border-top: 1px solid #fff;
  border-left: 1px solid #fff;
  background: #ececec;
}
.actions svg {
  width: 40px;
  height: 34px;
}
.actions span {
  flex: 1;
  text-align: center;
}
.edit {
  width: 70px;
  height: 23px;
  margin: 4px 0 0 6px;
  background: #efefef;
}

/* selected color */
.selected {
  width: 478px;
}
.selbody {
  display: flex;
}
.selleft {
  width: 260px;
  padding: 4px 0 0 9px;
}
h3 {
  width: 140px;
  margin-left: 3px;
  padding-left: 2px;
  background: #efefef;
  color: #222;
}
h3.tight {
  width: 54px;
}
.levels {
  display: block;
  width: 251px;
  height: 108px;
  margin-top: 11px;
  background: #efefef;
}
.levels text {
  font: 16px "Liberation Serif", serif;
  fill: #222;
}
.compare {
  display: flex;
  width: 240px;
  height: 93px;
  margin: 17px 0 19px 3px;
  background: #efefef;
  color: #000;
  font: bold 15px/22px "DejaVu Sans", sans-serif;
  text-align: center;
}
.compare span {
  flex: 1;
}
.target {
  width: 144px;
  height: 112px;
  margin: 1px 0 0 46px;
  padding: 14px 18px;
  border: 1px solid #333;
  background: conic-gradient(#40ff00, #ffc000 52deg, #ff0000 90deg, #ff0080 128deg, #8000c0 180deg, #0000ff 232deg, #0080c0 270deg, #00ff80 308deg, #40ff00);
}
.target svg {
  display: block;
  width: 108px;
  height: 82px;
}
.selright {
  width: 192px;
  padding-top: 1px;
  margin-left: 8px;
}
.selright h3 {
  width: 160px;
  margin-left: 12px;
  padding: 0;
  text-align: center;
}
.measureclip {
  display: flex;
  align-items: flex-start;
  height: 452px;
  margin-top: 11px;
  border: 2px solid;
  border-color: #777 #fff #fff #777;
  background: #efefef;
  overflow: hidden;
}
.meas {
  width: 166px;
  height: 461px;
  table-layout: fixed;
}
.meas th {
  width: 69px;
  padding: 0;
  border-right: 1px solid #777;
  border-bottom: 1px solid #777;
  line-height: 20px;
}
.meas td {
  border-right: 1px solid #ccc;
  border-bottom: 1px solid #ccc;
  background: #fff;
}
.meas sup {
  font-size: 9px;
  line-height: 1px;
}
.measureclip .vthumb {
  height: 264px;
}

/* graph */
.chart {
  margin: 9px 0 0 8px;
  border: 4px solid;
  border-color: #858585 #f6f6f6 #f6f6f6 #8a8a8a;
}
.chart svg {
  display: block;
  width: 100%;
}
.chart text {
  font: 17px "Liberation Serif", serif;
}
.chart .caption {
  font: bold 18px "Liberation Sans", sans-serif;
  fill: #d0d010;
}
.chart .mark {
  font: bold 20px "Liberation Sans", sans-serif;
  fill: #9c9c9c;
}
.vscroll {
  padding: 20px 11px 46px;
  border-top: 3px solid #777;
}
.vscroll .thumb {
  height: 100%;
  background: #888;
}
.hscroll {
  grid-column: 1 / 3;
  padding: 12px 86px 0 24px;
  border-bottom: 1px solid #fff;
}
.hscroll .thumb {
  height: 2px;
  background: #888;
}

/* tabs and status */
.tabbar {
  display: flex;
  align-items: center;
  height: 24px;
  border-top: 2px solid #333;
  background: #efefef;
  font: 13px/18px "Liberation Sans", sans-serif;
}
.nav {
  display: flex;
  align-items: center;
  justify-content: center;
  width: 22px;
  height: 22px;
  border: 1px solid;
  border-color: #fff #333 #333 #999;
}
.nav svg {
  width: 12px;
  height: 12px;
  fill: none;
  stroke: #000;
  stroke-width: 2;
}
.edge {
  width: 12px;
  height: 22px;
  fill: none;
  stroke: #000;
}
.tab {
  height: 22px;
  padding-bottom: 2px;
  border-bottom: 1px solid #888;
  text-align: center;
}
.current {
  width: 70px;
  background: #fff;
  font-weight: bold;
}
.gamma { width: 52px; }
.lum { width: 75px; }
.rgb { width: 82px; }
.tabicon {
  width: 18px;
  height: 18px;
  margin-right: 102px;
}
.tabref {
  margin-right: 8px;
}
.tabref input[type=checkbox] {
  margin-right: 8px;
}
.status {
  display: flex;
  align-items: center;
  gap: 4px;
  height: 23px;
  padding-left: 2px;
  background: linear-gradient(90deg, #e3ebf6, #edf2fb);
}
.pane {
  height: 22px;
  border: 1px solid;
  border-color: #9cb4d0 #fff #fff #9cb4d0;
  line-height: 20px;
  text-align: center;
}
.wide { width: 95px; }
.cap { width: 36px; }
.num { width: 41px; }
```
